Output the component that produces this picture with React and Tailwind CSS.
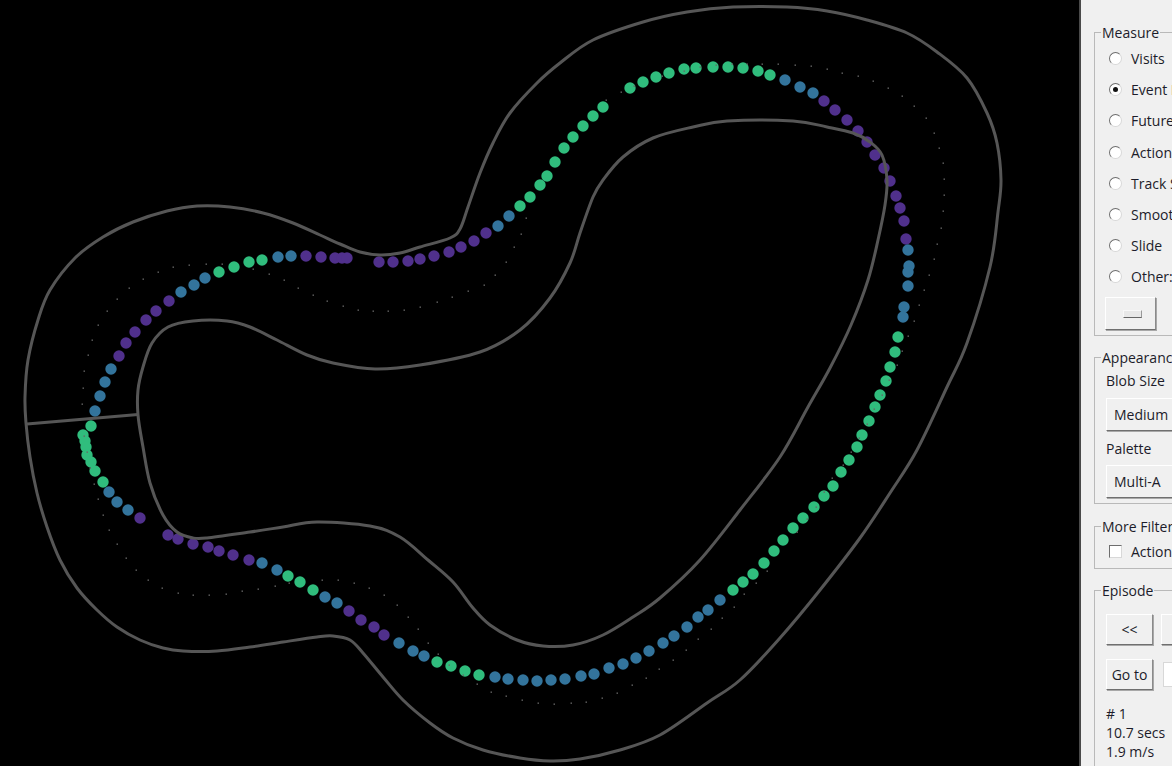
const P = "#50308c", B = "#33749c", G = "#30bd7d";

const dots = [
  [P,[[119,356],[126,343],[135,332],[146,320],[156,311],[169,301],[306,256],[321,257],[335,258],[342,258],[347,258],[140,518],[168,535],[178,539],[193,544],[208,547],[219,551],[233,555],[249,560],[349,611],[361,620],[374,627],[384,635],[379,262],[393,262],[408,261],[420,259],[434,256],[449,252],[461,247],[474,241],[486,233],[824,101],[835,110],[847,120],[858,131],[867,142],[875,155],[884,168],[890,181],[896,196],[900,208],[904,221],[906,239]]],
  [B,[[95,411],[100,396],[105,382],[111,369],[181,292],[194,285],[205,278],[278,257],[291,256],[109,492],[117,502],[128,510],[262,563],[277,570],[325,597],[337,603],[399,643],[413,651],[424,656],[495,677],[508,679],[523,680],[537,681],[551,680],[565,679],[581,676],[594,674],[609,668],[623,664],[636,658],[649,651],[663,643],[674,636],[687,627],[698,617],[708,610],[720,600],[498,226],[509,216],[785,80],[800,87],[813,93],[908,250],[909,266],[908,272],[908,286],[904,307],[903,317]]],
  [G,[[91,426],[219,272],[234,267],[249,262],[262,260],[83,435],[85,441],[86,447],[87,455],[91,462],[95,471],[103,482],[288,576],[300,582],[313,590],[437,662],[451,666],[465,671],[479,675],[733,590],[743,582],[753,574],[764,563],[774,551],[783,540],[793,528],[803,518],[814,507],[824,496],[833,486],[841,472],[849,460],[857,447],[862,435],[869,421],[875,407],[880,395],[886,381],[890,367],[895,352],[898,337],[520,206],[530,197],[540,185],[547,176],[555,162],[564,148],[573,137],[583,126],[593,116],[603,107],[630,88],[643,82],[656,77],[669,73],[684,69],[696,68],[713,67],[728,67],[743,68],[758,71],[770,75]]],
];

const specks = [[82,404],[83,388],[84,371],[88,355],[92,340],[98,325],[107,311],[117,299],[129,288],[143,279],[158,272],[173,267],[189,265],[206,264],[222,264],[253,269],[269,274],[284,280],[298,288],[313,295],[327,301],[343,306],[358,310],[373,311],[388,311],[404,310],[420,307],[437,302],[452,297],[468,291],[484,285],[495,275],[506,262],[514,247],[521,234],[526,218],[606,100],[621,92],[634,86],[662,76],[684,71],[700,67],[716,65],[732,64],[747,64],[762,64],[778,64],[795,65],[811,66],[827,69],[842,73],[858,76],[873,81],[888,88],[902,96],[914,106],[926,118],[934,133],[939,148],[943,163],[944,179],[944,195],[943,211],[941,228],[937,244],[934,259],[929,275],[924,290],[919,305],[914,321],[908,336],[902,351],[897,365],[889,380],[882,395],[874,409],[867,424],[859,438],[851,452],[843,465],[832,478],[824,492],[816,507],[807,519],[797,532],[767,571],[756,583],[744,594],[734,607],[722,618],[711,629],[698,639],[686,650],[673,660],[659,669],[646,678],[632,685],[617,693],[602,698],[586,702],[571,703],[554,704],[538,703],[522,700],[506,696],[491,692],[477,684],[463,675],[449,665],[438,654],[428,643],[418,629],[408,617],[397,605],[384,595],[369,588],[354,583],[338,580],[322,580],[289,583],[275,586],[258,589],[242,591],[226,594],[209,595],[193,595],[178,593],[162,588],[148,580],[136,570],[126,558],[117,544],[109,530],[103,515],[98,499],[94,484],[90,468],[87,452],[84,436]];

const outer = [[26,423],[25,397],[28,360],[38,320],[50,290],[75,258],[103,237],[133,222],[167,211],[197,206],[230,207],[263,213],[293,223],[320,235],[340,244],[360,252],[380,255],[400,253],[420,247],[450,238],[460,229],[468,207],[480,173],[493,143],[510,113],[537,83],[560,63],[593,40],[643,22],[687,12],[733,7],[787,7],[827,11],[867,20],[907,33],[937,52],[967,78],[987,113],[997,143],[1001,180],[998,212],[990,267],[967,343],[947,387],[917,450],[890,493],[860,538],[820,590],[780,638],[740,680],[707,703],[660,735],[620,750],[580,759],[550,761],[520,758],[483,750],[453,738],[430,723],[403,700],[383,677],[363,653],[350,640],[333,636],[317,637],[283,642],[250,647],[217,651],[183,651],[163,648],[140,640],[117,627],[97,610],[77,588],[60,560],[47,527],[37,493],[30,457]];

const inner = [[138,415],[138,390],[143,367],[152,343],[168,327],[193,321],[227,321],[250,327],[277,340],[307,355],[333,363],[375,369],[420,365],[480,352],[520,330],[550,298],[570,263],[580,233],[593,197],[603,180],[623,157],[653,138],[693,127],[727,121],[793,121],[827,127],[853,133],[870,142],[882,155],[887,180],[885,205],[878,240],[868,280],[851,325],[830,368],[808,407],[780,457],[740,510],[700,560],[660,598],[633,617],[603,635],[573,645],[543,646],[517,640],[490,625],[473,608],[453,582],[428,560],[400,537],[370,526],[317,522],[283,527],[250,532],[207,538],[193,538],[177,532],[163,515],[150,483],[143,447]];

function smooth(p) {
  const n = p.length;
  let d = `M${p[0][0]} ${p[0][1]}`;
  for (let i = 0; i < n; i++) {
    const a = p[(i - 1 + n) % n], b = p[i], c = p[(i + 1) % n], e = p[(i + 2) % n];
    const c1x = b[0] + (c[0] - a[0]) / 6, c1y = b[1] + (c[1] - a[1]) / 6;
    const c2x = c[0] - (e[0] - b[0]) / 6, c2y = c[1] - (e[1] - b[1]) / 6;
    d += `C${c1x.toFixed(1)} ${c1y.toFixed(1)} ${c2x.toFixed(1)} ${c2y.toFixed(1)} ${c[0]} ${c[1]}`;
  }
  return d + "Z";
}

function Track() {
  return (
    <svg width="1079" height="766" viewBox="0 0 1079 766" className="block shrink-0">
      {dots.map(([color, pts]) =>
        pts.map(([x, y]) => <circle key={color + x + "-" + y} cx={x} cy={y} r="5.7" fill={color} />)
      )}
      <g fill="none" stroke="#565656" strokeWidth="3" strokeLinejoin="round">
        <path d={smooth(outer)} />
        <path d={smooth(inner)} />
        <path d="M27 424L138 414.5" />
      </g>
      {specks.map(([x, y]) => (
        <rect key={x + "-" + y} x={x - 0.5} y={y - 0.5} width="1.5" height="1.3" fill="#666" />
      ))}
    </svg>
  );
}

function Radio({ label, checked }) {
  return (
    <div className="flex h-[31.2px] items-center gap-[9px] pl-[14px]">
      <span className="flex h-[13px] w-[13px] items-center justify-center rounded-full border border-t-[#6e6e6e] border-l-[#6e6e6e] border-r-[#d8d8d8] border-b-[#d8d8d8] bg-white">
        {checked && <span className="h-[5px] w-[5px] rounded-full bg-[#111]" />}
      </span>
      <span className="whitespace-nowrap">{label}</span>
    </div>
  );
}

const raised = "flex items-center justify-center border border-t-white border-l-white border-r-[#8a8a8a] border-b-[#6f6f6f] bg-[#f0f0f0] shadow-[1px_1px_0_#a8a8a8]";

function Group({ title, className, children }) {
  return (
    <fieldset className={"min-w-0 border border-[#b9b9b9] " + className}>
      <legend className="ml-[6px] h-[19px] px-[1px] leading-[19px]">{title}</legend>
      {children}
    </fieldset>
  );
}

export default function App() {
  return (
    <div className="flex h-[766px] w-[1172px] overflow-hidden bg-black">
      <Track />
      <div className="h-[766px] w-[400px] shrink-0 border-l-2 border-[#4a4a4a] bg-[#f0f0f0] pl-[13px] pt-[23px] text-[14px] leading-[19px] text-[#1c1c2a] [font-family:'Open_Sans','Noto_Sans',sans-serif]">
        <Group title="Measure" className="h-[313px]">
          <div className="pt-[1px]">
            <Radio label="Visits" />
            <Radio label="Event Duration" checked />
            <Radio label="Future Reward" />
            <Radio label="Action Value" />
            <Radio label="Track Speed" />
            <Radio label="Smoothness" />
            <Radio label="Slide" />
            <Radio label="Other:" />
          </div>
          <div className={raised + " ml-[10px] mt-[4px] h-[33px] w-[51px] pl-[3px] pt-[2px]"}>
            <span className="h-[8px] w-[19px] border border-t-[#f8f8f8] border-l-[#f8f8f8] border-r-[#999] border-b-[#666] bg-[#e8e8e8]" />
          </div>
        </Group>
        <Group title="Appearance" className="mt-[12px] h-[156px]">
          <div className="pl-[11px] pt-[4px]">Blob Size</div>
          <div className={raised + " ml-[11px] mt-[8px] !justify-start h-[33px] w-[200px] pl-[7px]"}>Medium</div>
          <div className="mt-[8px] pl-[11px]">Palette</div>
          <div className={raised + " ml-[11px] mt-[7px] !justify-start h-[33px] w-[200px] pl-[7px]"}>Multi-A</div>
        </Group>
        <Group title="More Filters" className="mt-[13px] h-[52px]">
          <div className="flex items-center gap-[9px] pl-[14px] pt-[6px]">
            <span className="h-[13px] w-[13px] border border-t-[#6e6e6e] border-l-[#6e6e6e] border-r-[#d8d8d8] border-b-[#d8d8d8] bg-white" />
            <span>Action Filter</span>
          </div>
        </Group>
        <Group title="Episode" className="mt-[12px] h-[200px]">
          <div className="flex gap-[8px] pl-[11px] pt-[14px]">
            <div className={raised + " h-[31px] w-[47px]"}>&lt;&lt;</div>
            <div className={raised + " h-[31px] w-[47px]"} />
          </div>
          <div className="flex items-center gap-[10px] pl-[11px] pt-[14px]">
            <div className={raised + " h-[31px] w-[47px]"}>Go to</div>
            <div className="h-[25px] w-[50px] border border-[#d8d8d8] bg-white" />
          </div>
          <div className="pl-[11px] pt-[14px]">
            <div>&#35; 1</div>
            <div>10.7 secs</div>
            <div>1.9 m/s</div>
          </div>
        </Group>
      </div>
    </div>
  );
}
